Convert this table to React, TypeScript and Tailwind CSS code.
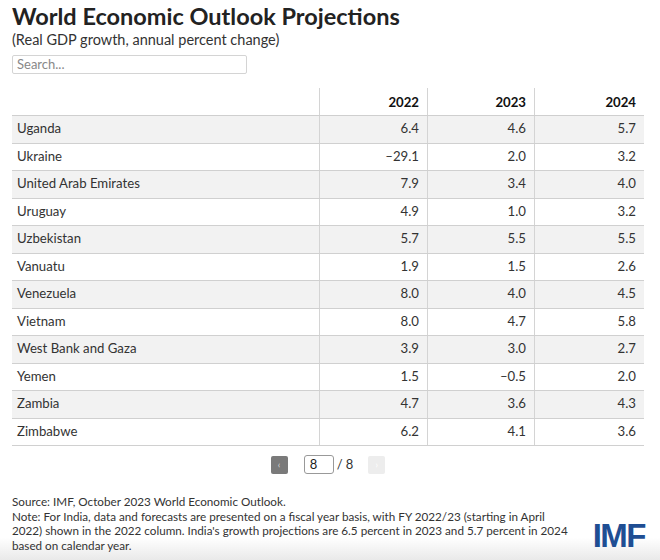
import React from "react";

const rows: [string, string, string, string][] = [
  ["Uganda", "6.4", "4.6", "5.7"],
  ["Ukraine", "–29.1", "2.0", "3.2"],
  ["United Arab Emirates", "7.9", "3.4", "4.0"],
  ["Uruguay", "4.9", "1.0", "3.2"],
  ["Uzbekistan", "5.7", "5.5", "5.5"],
  ["Vanuatu", "1.9", "1.5", "2.6"],
  ["Venezuela", "8.0", "4.0", "4.5"],
  ["Vietnam", "8.0", "4.7", "5.8"],
  ["West Bank and Gaza", "3.9", "3.0", "2.7"],
  ["Yemen", "1.5", "–0.5", "2.0"],
  ["Zambia", "4.7", "3.6", "4.3"],
  ["Zimbabwe", "6.2", "4.1", "3.6"],
];

export default function App() {
  return (
    <div
      className="w-[660px] h-[560px] overflow-hidden bg-linear-to-b from-white from-[96%] to-[#e9e9e9] text-[#333]"
      style={{ fontFamily: "Lato, 'Open Sans', sans-serif" }}
    >
      <div className="pl-3 pt-[2px]">
        <h1 className="text-[23.5px] leading-[28px] font-bold text-[#222]">
          World Economic Outlook Projections
        </h1>
        <div className="text-[14.5px] leading-[18px] mt-[1px] text-[#333]">
          (Real GDP growth, annual percent change)
        </div>
        <div className="mt-[6px] w-[235px] h-[19px] border border-[#d4d4d4] rounded-[2px] flex items-center pl-[4px] text-[13px] text-[#888]">
          Search...
        </div>
      </div>

      <div className="ml-3 mt-[14px] w-[632px] text-[13.2px] text-[#333]">
        <div className="flex h-[28px] border-b border-[#cfcfcf]">
          <div className="w-[308px] border-r border-[#d4d4d4]" />
          <div className="w-[108px] border-r border-[#d4d4d4] flex items-center justify-end pr-[8px] font-bold text-[#111] pt-[2px]">
            2022
          </div>
          <div className="w-[107px] border-r border-[#d4d4d4] flex items-center justify-end pr-[8px] font-bold text-[#111] pt-[2px]">
            2023
          </div>
          <div className="flex-1 flex items-center justify-end pr-[8px] font-bold text-[#111] pt-[2px]">
            2024
          </div>
        </div>
        {rows.map((r, i) => (
          <div
            key={r[0]}
            className={`flex h-[27.5px] border-b border-[#d0d0d0] ${i % 2 === 0 ? "bg-[#f2f2f2]" : "bg-white"}`}
          >
            <div className="w-[308px] border-r border-[#d4d4d4] flex items-center pl-[5px]">{r[0]}</div>
            <div className="w-[108px] border-r border-[#d4d4d4] flex items-center justify-end pr-[8px]">{r[1]}</div>
            <div className="w-[107px] border-r border-[#d4d4d4] flex items-center justify-end pr-[8px]">{r[2]}</div>
            <div className="flex-1 flex items-center justify-end pr-[8px]">{r[3]}</div>
          </div>
        ))}
      </div>

      <div className="flex items-center justify-center mt-[9px] h-[19px] pr-[4px]">
        <div className="w-[17px] h-[18px] bg-[#7a7a7a] rounded-[2px] flex items-center justify-center text-[9px] text-[#ddd] leading-none">
          ‹
        </div>
        <div className="ml-[16px] w-[30px] h-[19px] border border-[#999] rounded-[3px] flex items-center pl-[5px] text-[13px] text-[#222]">
          8
        </div>
        <div className="ml-[3px] text-[13px] text-[#333]">/ 8</div>
        <div className="ml-[15px] w-[17px] h-[18px] bg-[#ededed] rounded-[2px] flex items-center justify-center text-[9px] text-white leading-none">
          ›
        </div>
      </div>

      <div className="flex items-end justify-between pl-3 pr-[15px] mt-[20px]">
        <div className="text-[11.7px] leading-[14.7px] text-[#333] w-[560px] shrink-0">
          <div>Source: IMF, October 2023 World Economic Outlook.</div>
          <div>
            Note: For India, data and forecasts are presented on a fiscal year basis, with FY 2022/23 (starting in April
            2022) shown in the 2022 column. India's growth projections are 6.5 percent in 2023 and 5.7 percent in 2024
            based on calendar year.
          </div>
        </div>
        <div
          className="text-[#1f4e93] text-[33px] leading-[26px] font-bold tracking-[-1.5px] mb-[4px]"
          style={{ fontFamily: "'Liberation Sans', Arial, sans-serif" }}
        >
          IMF
        </div>
      </div>
    </div>
  );
}
